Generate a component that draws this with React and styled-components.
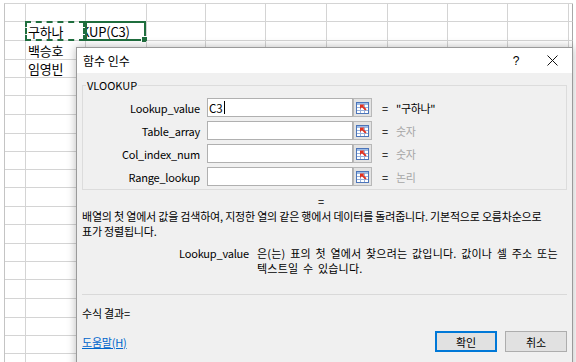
import React from 'react';
import styled, { createGlobalStyle } from 'styled-components';

const GlobalStyle = createGlobalStyle`
  html, body {
    margin: 0;
    padding: 0;
    background: #fff;
  }
  body {
    width: 576px;
    height: 362px;
    overflow: hidden;
    position: relative;
    font-family: "Noto Sans CJK KR", "Noto Sans", sans-serif;
    color: #000;
  }
`;

const colWidths = [21, 60, 61, 59, 60, 61, 61, 60, 60, 61, 4];
const rowHeights = [18, 19, 19, 18, 18, 19, 19, 18, 18, 18, 19, 18, 19, 18, 18, 19, 19, 18, 18, 19];

const cells = {
  '1-1': { text: '구하나', mark: 'dashed' },
  '1-2': { text: 'KUP(C3)', mark: 'active', clip: true },
  '2-1': { text: '백승호' },
  '3-1': { text: '임영빈' },
};

const Sheet = styled.div`
  display: grid;
  grid-template-columns: ${colWidths.map(w => w + 'px').join(' ')};
  grid-template-rows: ${rowHeights.map(h => h + 'px').join(' ')};
  margin: 3px 0 0 4px;
  border-top: 1px solid #d4d4d4;
  border-left: 1px solid #c4c4c4;
  width: max-content;
`;

const Cell = styled.div`
  position: relative;
  box-sizing: border-box;
  border-right: 1px solid ${p => (p.$edge ? '#a8a8a8' : '#d4d4d4')};
  border-bottom: 1px solid #d4d4d4;
  display: flex;
  align-items: center;
  padding-left: 2px;
  font-size: 13px;
  letter-spacing: -0.2px;
  white-space: nowrap;
`;

const CellText = styled.span`
  display: block;
  overflow: ${p => (p.$clip ? 'hidden' : 'visible')};
  text-indent: ${p => (p.$clip ? '-8px' : '0')};
  margin-left: ${p => (p.$clip ? '-2px' : '0')};
  padding-left: ${p => (p.$clip ? '3px' : '0')};
  width: 100%;
`;

const Marquee = styled.div`
  position: absolute;
  top: -1px;
  left: -1px;
  right: 0;
  bottom: -1px;
  border: 2px ${p => (p.$kind === 'dashed' ? 'dashed' : 'solid')} #1f6e3e;
  pointer-events: none;
`;

const Handle = styled.div`
  position: absolute;
  right: -4px;
  bottom: -4px;
  width: 5px;
  height: 5px;
  background: #1f6e3e;
  border: 1px solid #fff;
`;

const Dialog = styled.div`
  position: absolute;
  left: 76px;
  top: 47px;
  width: 497px;
  height: 330px;
  box-sizing: border-box;
  border: 1px solid #9a9a9a;
  background: #f0f0f0;
  box-shadow: 0 0 9px rgba(0, 0, 0, 0.28);
  display: flex;
  flex-direction: column;
  font-size: 11px;
`;

const TitleBar = styled.div`
  height: 25px;
  background: #fff;
  display: flex;
  align-items: center;
  padding-left: 6px;
`;

const Title = styled.div`
  flex: 1;
  font-size: 12px;
  letter-spacing: 0;
`;

const TitleButton = styled.div`
  width: ${p => p.$w}px;
  margin-right: ${p => p.$mr || 0}px;
  height: 25px;
  display: flex;
  align-items: center;
  justify-content: center;
  font-family: "Liberation Sans", sans-serif;
  font-size: 12px;
`;

const Body = styled.div`
  padding: 5px 5px 0 5px;
  display: flex;
  flex-direction: column;
`;

const Group = styled.fieldset`
  margin: 0;
  padding: 6px 0 3px 0;
  border: 1px solid #dcdcdc;
  min-width: 0;
  display: flex;
  flex-direction: column;
  gap: 4px;
`;

const Legend = styled.legend`
  padding: 0 1px;
  margin-left: 3px;
  line-height: 14px;
  font-size: 11px;
`;

const ArgRow = styled.div`
  display: flex;
  align-items: center;
  height: 19px;
`;

const ArgLabel = styled.div`
  width: 117px;
  text-align: right;
  letter-spacing: -0.2px;
`;

const ArgInput = styled.div`
  margin-left: 7px;
  width: 146px;
  height: 19px;
  box-sizing: border-box;
  border: 1px solid #b0b0b0;
  background: #fff;
  display: flex;
  align-items: center;
  padding-left: 1px;
  font-size: 11.5px;
`;

const Caret = styled.span`
  display: inline-block;
  width: 1px;
  height: 13px;
  background: #000;
  margin-left: 1px;
`;

const RefButton = styled.div`
  width: 19px;
  height: 19px;
  box-sizing: border-box;
  border: 1px solid #b8b8b8;
  background: #e3e3e3;
  display: flex;
  align-items: center;
  justify-content: center;
`;

const Eq = styled.div`
  margin-left: 10px;
  width: 14px;
`;

const ArgValue = styled.div`
  color: ${p => (p.$muted ? '#a6a6a6' : '#000')};
  letter-spacing: -0.3px;
`;

const EqualsLine = styled.div`
  margin-top: 4px;
  line-height: 15px;
  padding-left: 236px;
`;

const Description = styled.div`
  line-height: 15px;
  letter-spacing: -0.2px;
  white-space: nowrap;
`;

const ArgHelp = styled.div`
  margin-top: 7px;
  display: grid;
  grid-template-columns: 167px auto;
  column-gap: 8px;
  line-height: 15px;
`;

const HelpName = styled.div`
  text-align: right;
  letter-spacing: -0.2px;
`;

const HelpText = styled.div`
  letter-spacing: 0.2px;
  word-spacing: 2px;
  white-space: nowrap;
`;

const Separator = styled.div`
  margin-top: 18px;
  height: 1px;
  background: #d9d9d9;
`;

const Result = styled.div`
  margin-top: 11px;
  line-height: 15px;
  letter-spacing: -0.2px;
`;

const Footer = styled.div`
  margin-top: 10px;
  display: flex;
  align-items: center;
  justify-content: space-between;
`;

const HelpLink = styled.a`
  color: #0066cc;
  text-decoration: underline;
  letter-spacing: -0.2px;
`;

const Buttons = styled.div`
  display: flex;
  gap: 8px;
`;

const Button = styled.button`
  width: 62px;
  height: 21px;
  box-sizing: border-box;
  margin: 0;
  padding: 0;
  font-family: inherit;
  font-size: 11px;
  color: #000;
  background: #e1e1e1;
  border: 1px solid ${p => (p.$primary ? '#0078d7' : '#adadad')};
  box-shadow: ${p => (p.$primary ? 'inset 0 0 0 1px #0078d7' : 'none')};
`;

const CloseIcon = () => (
  <svg width="11" height="11" viewBox="0 0 11 11">
    <path d="M0.5 0.5 L10.5 10.5 M10.5 0.5 L0.5 10.5" stroke="#111" strokeWidth="1" fill="none" />
  </svg>
);

const RangeIcon = () => (
  <svg width="13" height="12" viewBox="0 0 13 12">
    <rect x="0.5" y="0.5" width="12" height="11" fill="#fff" stroke="#4b74b9" />
    <rect x="1" y="1" width="11" height="2" fill="#9bbbe6" />
    <path d="M4.5 3 V11 M8.5 3 V11 M1 5.5 H12 M1 8.5 H12" stroke="#97b1dc" strokeWidth="1" />
    <polygon points="4,2.5 8.6,2.5 7.3,3.9 10.6,7.2 9.2,8.6 5.9,5.3 4,7.1" fill="#e2321f" />
  </svg>
);

const args = [
  { name: 'Lookup_value', input: 'C3', value: '"구하나"' },
  { name: 'Table_array', value: '숫자', muted: true },
  { name: 'Col_index_num', value: '숫자', muted: true },
  { name: 'Range_lookup', value: '논리', muted: true },
];

export default function App() {
  return (
    <>
      <GlobalStyle />
      <Sheet>
        {rowHeights.map((_, r) =>
          colWidths.map((__, c) => {
            const cell = cells[`${r}-${c}`];
            return (
              <Cell key={`${r}-${c}`} $edge={c === colWidths.length - 1}>
                {cell && <CellText $clip={cell.clip}>{cell.text}</CellText>}
                {cell && cell.mark && (
                  <Marquee $kind={cell.mark}>{cell.mark === 'active' && <Handle />}</Marquee>
                )}
              </Cell>
            );
          })
        )}
      </Sheet>

      <Dialog>
        <TitleBar>
          <Title>함수 인수</Title>
          <TitleButton $w={20} $mr={6}>?</TitleButton>
          <TitleButton $w={40}>
            <CloseIcon />
          </TitleButton>
        </TitleBar>
        <Body>
          <Group>
            <Legend>VLOOKUP</Legend>
            {args.map(a => (
              <ArgRow key={a.name}>
                <ArgLabel>{a.name}</ArgLabel>
                <ArgInput>
                  {a.input}
                  {a.input && <Caret />}
                </ArgInput>
                <RefButton>
                  <RangeIcon />
                </RefButton>
                <Eq>=</Eq>
                <ArgValue $muted={a.muted}>{a.value}</ArgValue>
              </ArgRow>
            ))}
          </Group>

          <EqualsLine>=</EqualsLine>
          <Description>
            배열의 첫 열에서 값을 검색하여, 지정한 열의 같은 행에서 데이터를 돌려줍니다. 기본적으로 오름차순으로
            <br />
            표가 정렬됩니다.
          </Description>

          <ArgHelp>
            <HelpName>Lookup_value</HelpName>
            <HelpText>
              은(는) 표의 첫 열에서 찾으려는 값입니다. 값이나 셀 주소 또는
              <br />
              텍스트일 수 있습니다.
            </HelpText>
          </ArgHelp>

          <Separator />
          <Result>수식 결과=</Result>

          <Footer>
            <HelpLink>도움말(H)</HelpLink>
            <Buttons>
              <Button $primary>확인</Button>
              <Button>취소</Button>
            </Buttons>
          </Footer>
        </Body>
      </Dialog>
    </>
  );
}
